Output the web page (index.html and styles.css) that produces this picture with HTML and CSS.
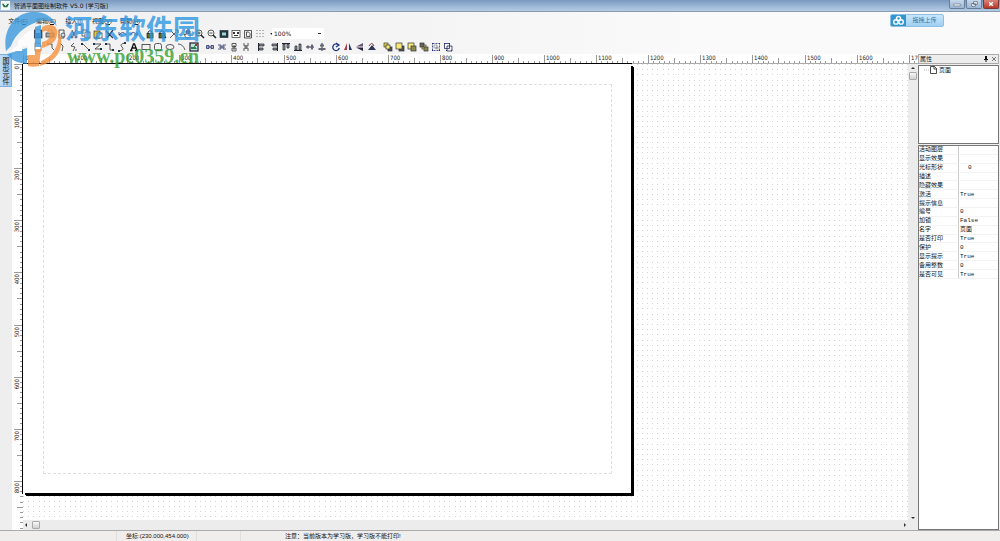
FILE: index.html
```html
<!DOCTYPE html>
<html lang="zh-CN">
<head>
<meta charset="utf-8">
<title>智通平面图绘制软件 V5.0 [学习版]</title>
<link rel="stylesheet" href="styles.css">
</head>
<body>
<div class="app">
  <header class="titlebar">
    <svg class="app-icon" viewBox="0 0 10 10"><rect width="10" height="10" fill="#f4faf6"/><path d="M1 3h3l1 2 1-2h3L7 7H3z" fill="#2b6f50"/><path d="M3 3l2 2 2-2" stroke="#fff" fill="none"/></svg>
    <h1 class="title">智通平面图绘制软件 V5.0 [学习版]</h1>
    <div class="window-buttons">
      <button class="win" aria-label="最小化"><svg viewBox="0 0 15 8"><path d="M4 4h7v2H4z" fill="#fff" stroke="#53657c" stroke-width=".6"/></svg></button>
      <button class="win" aria-label="还原"><svg viewBox="0 0 15 8"><path d="M7 1.5h4v3H7zM5 3.500h4v3H5z" fill="#fff" stroke="#53657c" stroke-width=".8"/></svg></button>
      <button class="win close" aria-label="关闭"><svg viewBox="0 0 15 8"><path d="M5.500 2l4 4m0-4l-4 4" stroke="#fff" stroke-width="1.500"/></svg></button>
    </div>
  </header>

  <div class="bars">
    <nav class="menu">
      <button>文件(<u>F</u>)</button><button>编辑(<u>E</u>)</button><button>插入(<u>I</u>)</button><button>视图(<u>V</u>)</button><button>帮助(<u>H</u>)</button>
    </nav>
    <div class="toolbar" id="main-tools">
      <select class="zoom-box" aria-label="缩放"><option>100%</option></select>
    </div>
    <div class="toolbar" id="draw-tools"></div>
    <button class="upload">
      <span class="upload-mark"><svg viewBox="0 0 14 12"><g fill="none" stroke="#fff" stroke-width="1.500"><circle cx="7" cy="3.800" r="2.200"/><circle cx="4.200" cy="7.600" r="2.400"/><circle cx="9.800" cy="7.600" r="2.400"/></g></svg></span>
      <span class="upload-text">拖拽上传</span>
    </button>
    <div class="watermark">
      <svg class="mark-logo" viewBox="4 11 58 56">
        <path d="M6 50C2 28 16 10 35 11c10 0 18 5 22 14-5-5-12-7-20-4-14 5-22 13-26 24z" fill="#3b9ade"/>
        <path d="M7 53l20-6v16C17 62 11 59 7 53z" fill="#3b9ade"/>
        <path d="M35 26l6-2v22h-6z" fill="#3b9ade"/>
        <path d="M10 50l8-6v-4l8-8 8-4v34h-6V45h-6v5z" fill="#fff"/>
        <path d="M42 26c9-5 17-1 15 8-1 7-7 11-15 13v-6c5-1 8-4 8-7 0-4-4-5-8-3z" fill="#f5923e"/>
        <path d="M35 48h6l-2 17c-4 1-8 1-11 0V54h7z" fill="#f5923e"/>
        <path d="M58 28c9 17-1 33-18 37l1-5c13-5 19-16 17-32z" fill="#f5923e"/>
      </svg>
      <div class="mark-words"><span class="mark-name">河东软件园</span><span class="mark-url">www.pc0359.cn</span></div>
    </div>
  </div>

  <main class="work">
    <aside class="side"><button class="side-tab">图形元件</button></aside>
    <section class="editor">
      <svg class="ruler ruler-top" id="ruler-top"></svg>
      <svg class="ruler ruler-left" id="ruler-left"></svg>
      <div class="canvas">
        <svg class="grid"><defs><pattern id="dots" width="26" height="26" patternUnits="userSpaceOnUse"><g id="dot-cells" fill="#d4d4d4"></g></pattern></defs><rect width="100%" height="100%" fill="url(#dots)"/></svg>
        <div class="sheet"><div class="margin"></div></div>
      </div>
      <div class="vscroll"><i class="arrow up"></i><i class="thumb"></i><i class="arrow down"></i></div>
      <div class="hscroll"><i class="arrow left"></i><i class="thumb"></i><i class="arrow right"></i></div>
    </section>
    <aside class="props">
      <div class="props-head"><h2>属性</h2>
        <button aria-label="固定"><svg viewBox="0 0 6 6"><path d="M2 0h2v3h1v1H3.500v2h-1V4H1V3h1z" fill="#111"/></svg></button>
        <button aria-label="关闭"><svg viewBox="0 0 6 6"><path d="M1 1l4 4m0-4L1 5" stroke="#555" stroke-width=".8"/></svg></button>
      </div>
      <div class="tree"><svg viewBox="0 0 18 8"><path d="M4 4h5" stroke="#bbb" stroke-dasharray="1 1"/><path d="M10.500.5h4l2 2v5h-6zM14 .5v2.500h2.500" fill="#fff" stroke="#222" stroke-width=".8"/></svg><span>页面</span></div>
      <div class="sheet-props">
        <table>
          <tr><th>活动图层</th><td></td></tr>
          <tr><th>显示效果</th><td></td></tr>
          <tr><th>光标形状</th><td class="inset">0</td></tr>
          <tr><th>描述</th><td></td></tr>
          <tr><th>隐藏效果</th><td></td></tr>
          <tr><th>激活</th><td>True</td></tr>
          <tr><th>提示信息</th><td></td></tr>
          <tr><th>编号</th><td>0</td></tr>
          <tr><th>加锁</th><td>False</td></tr>
          <tr><th>名字</th><td>页面</td></tr>
          <tr><th>是否打印</th><td>True</td></tr>
          <tr><th>保护</th><td>0</td></tr>
          <tr><th>显示提示</th><td>True</td></tr>
          <tr><th>备用整数</th><td>0</td></tr>
          <tr><th>是否可见</th><td>True</td></tr>
        </table>
      </div>
    </aside>
  </main>

  <footer class="status"><span class="cell first"></span><span class="cell coords">坐标:(230.000,454.000)</span><span class="cell spare"></span><span class="cell note">注意：当前版本为学习版，学习版不能打印!</span></footer>
</div>
<script src="app.js"></script>
</body>
</html>
```
FILE: styles.css
```css
* { box-sizing: border-box; }
body { margin: 0; font: 6px/8px "Liberation Sans", "Noto Sans CJK SC", sans-serif; color: #111; background: #f0eeee; }
button { border: 0; padding: 0; margin: 0; background: none; font: inherit; color: inherit; display: block; }
h1, h2 { margin: 0; font: inherit; }
svg { display: block; }
.app { height: 100vh; display: flex; flex-direction: column; overflow: hidden; }

.titlebar { flex: none; height: 12px; display: flex; align-items: center; background: linear-gradient(#7898bd, #9db9d8 60%, #b4cae2); border-bottom: 1px solid #8a9cb2; padding-left: 1px; }
.app-icon { width: 9px; height: 9px; }
.title { margin-left: 4px; flex: 1; white-space: nowrap; font-family: "DejaVu Sans", "Noto Sans CJK SC", sans-serif; }
.window-buttons { display: flex; align-self: flex-start; gap: 1px; padding-right: 1px; }
.win { width: 16px; height: 9px; border: 1px solid #667d99; border-top: 0; border-radius: 0 0 2px 2px; background: linear-gradient(#c7d7ea, #9cb5d2); }
.win svg { width: 14px; height: 8px; }
.win.close { background: linear-gradient(#d9837a, #b93728); border-color: #7c3530; }

.bars { flex: none; position: relative; height: 42px; background: linear-gradient(90deg, #f1f1f1, #f4f4f4 40%, #fafafa 70%); padding-top: 2px; }
.menu { display: flex; height: 13px; padding-left: 8px; gap: 8px; }
.menu button { width: 20px; line-height: 10px; white-space: nowrap; }
.toolbar { display: flex; align-items: center; height: 13px; padding-left: 32px; }
.toolbar button { width: 12px; height: 12px; flex: none; }
.toolbar button svg { width: 10px; height: 10px; margin: 1px; }
.toolbar .gap { width: 4px; flex: none; }
.toolbar .hair { width: 2px; }
.toolbar .narrow { width: 6px; }
.zoom-box { appearance: none; order: 1; width: 52px; height: 11px; border: 0; border-radius: 0; padding: 0 2px; font: 6px/11px "DejaVu Sans", sans-serif; color: #111; background: #fff linear-gradient(#333, #333) no-repeat 46px 5px / 3px 1px; }
.upload { position: absolute; right: 56px; top: 2px; width: 54px; height: 13px; display: flex; border: 1px solid #8ebfe2; border-radius: 2px; overflow: hidden; background: linear-gradient(#c9e6fb, #9fd0f2); color: #3f74a0; }
.upload-mark { width: 15px; height: 11px; background: #2e97d3; }
.upload-mark svg { width: 13px; height: 11px; margin-left: 1px; }
.upload-text { flex: 1; line-height: 11px; text-align: center; }
.watermark { position: absolute; left: 4px; top: 0; display: flex; gap: 3px; pointer-events: none; opacity: .8; z-index: 3; }
.mark-logo { width: 58px; height: 56px; }
.mark-words { display: flex; flex-direction: column; }
.mark-name { font: bold 27px/32px "Noto Sans CJK SC", sans-serif; color: #2f97e2; }
.mark-url { font: bold 20px/24px "Liberation Serif", serif; color: #38a232; padding-left: 2px; }

.work { flex: 1; min-height: 0; display: flex; }
.side { width: 12px; background: #eee; flex: none; }
.side-tab { width: 12px; height: 33px; border: 1px solid #7daede; border-left: 0; background: linear-gradient(90deg, #bfdcf8, #9cc8f2); writing-mode: vertical-rl; line-height: 11px; text-align: center; font-size: 7px; }
.editor { flex: 1; min-width: 0; display: grid; grid-template: 10px 1fr 10px / 11px 1fr 10px; }
.ruler { background: #fff; font: 6px "DejaVu Sans Condensed", "DejaVu Sans", sans-serif; overflow: hidden; width: 100%; height: 100%; }
.ruler-top { grid-area: 1 / 1 / 2 / 4; }
.ruler-left { grid-area: 2 / 1 / 4 / 2; }
.canvas { grid-area: 2 / 2; position: relative; overflow: hidden; background: #fff; }
.grid { position: absolute; inset: 0; width: 100%; height: 100%; }
.sheet { position: absolute; left: 0; top: 0; width: 608px; height: 429px; background: #fff; box-shadow: 2px 2px 0 #000, 3px 3px 0 #000; padding: 20px 19px 19px 20px; }
.margin { height: 100%; border: 1px dashed #dedede; }
.vscroll, .hscroll { background: #ececec; display: flex; align-items: center; }
.vscroll { grid-area: 2 / 3 / 4 / 4; flex-direction: column; padding: 3px 0 11px; }
.hscroll { grid-area: 3 / 2; padding: 0 2px; }
.arrow { width: 0; height: 0; border: 2px solid transparent; }
.arrow.up { border-bottom-color: #333; border-top: 0; }
.arrow.down { border-top-color: #333; border-bottom: 0; margin-top: auto; }
.arrow.left { border-right-color: #333; border-left: 0; }
.arrow.right { border-left-color: #333; border-right: 0; margin-left: auto; }
.thumb { width: 8px; height: 8px; border: 1px solid #aaa; border-radius: 1px; background: linear-gradient(#f8f8f8, #d0d0d0); }
.vscroll .thumb { margin-top: 3px; }
.hscroll .thumb { margin-left: 5px; }

.props { width: 82px; flex: none; display: flex; flex-direction: column; gap: 1px; padding-right: 1px; }
.props-head { height: 10px; display: flex; align-items: center; border: 1px solid #aaa; background: #ededed; padding: 0 1px; gap: 2px; }
.props-head h2 { flex: 1; }
.props-head svg { width: 6px; height: 6px; }
.tree { height: 79px; border: 1px solid #777; background: #fff; display: flex; padding-left: 1px; gap: 1px; }
.tree svg { width: 18px; height: 8px; }
.sheet-props { flex: 1; border: 1px solid #777; background: #fff; }
table { width: 100%; height: 133px; border-spacing: 0; table-layout: fixed; }
th, td { padding: 0 1px; font-weight: normal; text-align: left; line-height: 7px; border-bottom: 1px solid #f3f3f3; white-space: nowrap; }
th { width: 40px; padding: 0; border-right: 1px solid #ccc; }
td { font-family: "Liberation Mono", "Noto Sans CJK SC", monospace; }
td.inset { padding-left: 9px; }

.status { flex: none; height: 11px; border-top: 1px solid #aaa; background: #f0eded; display: flex; line-height: 10px; }
.cell { border-right: 1px solid #e2dede; white-space: nowrap; }
.first { width: 117px; }
.coords { width: 80px; padding-left: 9px; }
.spare { width: 44px; }
.note { flex: 1; padding-left: 44px; border: 0; }
```
FILE: app.js
```js
const K = 'fill="none" stroke="#333" stroke-width=".8"';
const N = 'fill="none" stroke="#232b66" stroke-width=".8"';
const box = (x, y, w, h, f) => `<rect x="${x}" y="${y}" width="${w}" height="${h}" fill="${f}" stroke="#333" stroke-width=".7"/>`;
const lock = '<path d="M3 5V3q2-3 4 0v2" fill="none" stroke="#333"/><rect x="2" y="4.500" width="6" height="4.500" fill="#5e6b1d" stroke="#222" stroke-width=".7"/>';
const icons = {
  新建: `<path d="M2 1h4l2 2v6H2z" fill="#fff" stroke="#777" stroke-width=".8"/>`,
  保存: box(1, 1, 8, 8, '#456890') + '<path d="M3 1h4v3H3z" fill="#fff"/>',
  打印: box(1, 4, 8, 4, '#aaa') + '<path d="M3 1h4v3H3z" fill="#fff" stroke="#777" stroke-width=".6"/>',
  预览: `<path d="M2 1h5v8H2z" ${K}/><circle cx="6" cy="6" r="2" fill="#cde" stroke="#333" stroke-width=".7"/>`,
  剪切: `<path d="M3 1l3 6M7 1L4 7" ${K}/><circle cx="3" cy="8" r="1" ${N}/><circle cx="7" cy="8" r="1" ${N}/>`,
  复制: box(1, 1, 5, 6, '#fff') + box(4, 3, 5, 6, '#fff'),
  粘贴: box(1, 2, 6, 7, '#e5c832') + box(4, 4, 5, 5, '#fff'),
  删除: '<path d="M1 2l7 7M8 1L2 9" stroke="#28335f" stroke-width="1.300"/>',
  撤销: `<path d="M2 3v3h3M2 6q4-5 7 0" ${N}/>`,
  重做: `<path d="M8 3v3H5M8 6Q4 1 1 6" ${N}/>`,
  锁定: lock,
  解锁: lock + '<path d="M7 6l2 3" stroke="#111"/>',
  工具: `<path d="M1 9l6-6M2 2l6 6M6 1h3v3" ${K}/>`,
  平移: `<path d="M3 9L1 5l2 1V2h1v3V1h1v4V1h1v4V2h1v4L7 9z" fill="#fff" stroke="#333" stroke-width=".7"/>`,
  放大: `<circle cx="4" cy="4" r="3" ${K}/><path d="M6 6l3 3" stroke="#222" stroke-width="1.500"/><path d="M2.500 4h3M4 2.500v3" ${K}/>`,
  缩小: `<circle cx="4" cy="4" r="3" ${K}/><path d="M6 6l3 3" stroke="#222" stroke-width="1.500"/><path d="M2.500 4h3" ${K}/>`,
  全屏: box(1, 1.5, 8, 7, '#1c3844') + '<path d="M3 3.500h4v3H3z" fill="#a9d0d0"/>',
  适合: box(1, 1.5, 8, 7, '#fff') + '<path d="M2 3h2v2H2zM6 3h2v2H6zM3 6h4v1H3z" fill="#333"/>',
  页面: `<path d="M1.500 1.500h7V9h-7zM3.500 3h2l1.500 1.500V7.500H3.500z" ${K}/>`,
  网格: '<path d="M2 1v8M5 1v8M8 1v8" stroke="#777" stroke-dasharray="1 2"/>',
  网格选项: '<path d="M3 4h4L5 6z" fill="#222"/>',
  多边形: `<path d="M2 2h5v4l2 2" ${K}/>`,
  直角: `<path d="M3 1l3 3-1 5" ${K}/>`,
  曲笔: `<path d="M5 1L2 4l4 1-2 4M7 7v2" ${K}/>`,
  直线: '<path d="M1.500 1.500l7 7" stroke="#444" stroke-width=".8"/><path d="M0 1h2v2H0zM7 7h2v2H7z" fill="#234"/>',
  折线: `<path d="M1 2h7L2 7h6" ${K}/><path d="M0 1h2v2H0zM7 6h2v2H7z" fill="#234"/>`,
  连线: `<path d="M1 2h4v6h4" ${K}/><path d="M0 1h2v2H0zM7 7h2v2H7z" fill="#234"/>`,
  曲线: `<path d="M8 1Q2 2 5 5T2 9" ${K}/><path d="M7 0h2v2H7zM1 8h2v2H1z" fill="#234"/>`,
  文字: '<path d="M2 8.500L4.500 2h1L8 8.500M3.500 6h3M1 8.500h2.500M6 8.500h3" fill="none" stroke="#111" stroke-width="1.300"/>',
  矩形: `<rect x="1" y="2.500" width="8" height="5" ${K}/>`,
  圆角矩形: `<rect x="1.500" y="1.500" width="7" height="7" rx="2" ${K}/>`,
  椭圆: `<ellipse cx="5" cy="5" rx="4" ry="2.500" ${K}/>`,
  弧: `<path d="M1 2q5 0 7 6" ${K}/>`,
  图片: '<rect x="1" y="1" width="8" height="8" fill="#bde4d8" stroke="#211a32" stroke-width="1.200"/><path d="M2 5h3V3l3 4H2z" fill="#247d55"/><path d="M6 2h2v2H6z" fill="#933"/>',
  等宽: `<path d="M1.500 3.500h2.500v3H1.500zM6 3.500h2.500v3H6zM2 5h6" ${N}/>`,
  水平间距: `<path d="M1 3h3v4H1M9 3H6v4h3M2 5h6" ${N}/>`,
  等高: `<path d="M3 1.500h4v3H3zM3 6h4v3H3zM5 3v5" ${K}/>`,
  垂直间距: `<path d="M3 1v3h4V1M3 9V6h4v3M5 3v4" ${K}/>`,
  左对齐: '<path d="M1.500 1v8" stroke="#223"/><path d="M2 2h5v2H2zM2 6h4v2H2z" fill="#8293a5" stroke="#222" stroke-width=".7"/>',
  右对齐: '<path d="M8.500 1v8" stroke="#223"/><path d="M3 2h5v2H3zM4 6h4v2H4z" fill="#8293a5" stroke="#222" stroke-width=".7"/>',
  顶对齐: '<path d="M1 1.500h8" stroke="#223"/><path d="M2 2h2v6H2zM6 2h2v4H6z" fill="#8293a5" stroke="#222" stroke-width=".7"/>',
  底对齐: '<path d="M1 8.500h8" stroke="#223"/><path d="M2 4h2v4H2zM6 2h2v6H6z" fill="#8293a5" stroke="#222" stroke-width=".7"/>',
  横向居中: '<path d="M1 5h8" stroke="#223"/><path d="M2 3.500h2v3H2zM6 2.500h2v5H6z" fill="#667"/>',
  纵向居中: '<path d="M5 1v8" stroke="#223"/><path d="M3 2.500h4v2H3zM1.500 6h7v2h-7z" fill="#667"/>',
  旋转: '<path d="M7.500 3A3.300 3.300 0 1 0 8.300 6M5 1l3 2-3 2" fill="none" stroke="#1d3480" stroke-width="1.300"/>',
  水平翻转: '<path d="M4 1v7H1z" fill="#a43e4d"/><path d="M6 1v7h3z" fill="#25365f"/>',
  垂直翻转: '<path d="M8 1v3.500H1z" fill="#6b5678"/><path d="M8 9V5.500H1z" fill="#28263f"/>',
  自由旋转: '<path d="M1 8h8L5 3z" fill="#303455"/><path d="M2 4q3-5 5 0" fill="none" stroke="#843d50"/>',
  置前: box(1, 1, 4, 4, '#eadf47') + box(5, 5, 4, 4, '#555') + box(3, 3, 4, 4, '#f3ea78'),
  前移: box(4, 4, 5, 5, '#555') + box(1, 1, 6, 6, '#f3ea78'),
  后移: box(1, 1, 6, 6, '#f3ea78') + box(4, 4, 5, 5, '#8c8a4d'),
  置后: box(3, 3, 4, 4, '#f3ea78') + box(1, 1, 4, 4, '#666') + box(5, 5, 4, 4, '#8c8a4d'),
  组合: `<path d="M1.500 1.500h7v7h-7z" ${N} stroke-dasharray="2 1"/><path d="M3 3h3v3H3zM5 5h2v2H5z" fill="none" stroke="#667" stroke-width=".5"/><path d="M1 1h1v1H1zM8 1h1v1H8zM1 8h1v1H1zM8 8h1v1H8z" fill="#20296a"/>`,
  取消组合: `<path d="M1.500 1.500h5v5h-5zM4 4h5v5H4z" ${N}/><path d="M1 1h1v1H1zM6 1h1v1H6zM8 8h1v1H8zM3 8h1v1H3z" fill="#20296a"/>`
};

function fill(id, list) {
  const html = list.split(' ').map(n => n === '|' ? '<i class="gap"></i>'
    : n === ':' ? '<i class="gap hair"></i>'
    : `<button class="${n === '网格选项' ? 'narrow' : ''}" aria-label="${n}"><svg viewBox="0 0 10 10">${icons[n]}</svg></button>`).join('');
  document.getElementById(id).insertAdjacentHTML('afterbegin', html);
}
fill('main-tools', '保存 打印 预览 剪切 复制 粘贴 删除 撤销 重做 | 锁定 解锁 工具 : 平移 放大 缩小 全屏 适合 页面 网格 网格选项');
fill('draw-tools', '新建 多边形 直角 曲笔 直线 折线 连线 曲线 文字 矩形 圆角矩形 椭圆 弧 图片 | 等宽 水平间距 等高 垂直间距 | 左对齐 右对齐 顶对齐 底对齐 横向居中 纵向居中 : 旋转 水平翻转 垂直翻转 自由旋转 | 置前 前移 后移 置后 组合 取消组合');

// Ten minor divisions per 100 units.
const UNIT = 52.1;
function ticks(length, drawTick, drawLabel) {
  let lines = '', labels = '';
  for (let i = 0; i * UNIT / 10 < length; i++) {
    const p = Math.round(i * UNIT / 10);
    lines += drawTick(p, i % 10 === 0 ? 9 : i % 5 === 0 ? 6 : 3);
    if (i % 10 === 0) labels += drawLabel(p, i * 10);
  }
  return `<g stroke="#999">${lines}</g><g fill="#222">${labels}</g>`;
}
function drawRulers() {
  const top = document.getElementById('ruler-top');
  const left = document.getElementById('ruler-left');
  const width = top.getBoundingClientRect().width;
  const height = left.getBoundingClientRect().height;
  top.innerHTML = ticks(width - 11,
    (p, n) => `<path d="M${p + 11}.5 ${10 - n}V10"/>`,
    (p, t) => `<text x="${p + 13}" y="6">${t}</text>`)
    + `<path d="M11 9.500H620" stroke="#000"/><path d="M620 9.500H${width}" stroke="#aaa"/>`;
  left.innerHTML = ticks(height,
    (p, n) => `<path d="M${11 - n} ${p}.5H11"/>`,
    (p, t) => `<text transform="translate(7 ${p + 2}) rotate(-90)" text-anchor="end">${t}</text>`)
    + '<path d="M10.500 0V430" stroke="#000"/>';
}
drawRulers();
addEventListener('resize', drawRulers);

const steps = [0, 5, 10, 16, 21];
document.getElementById('dot-cells').innerHTML =
  steps.flatMap(x => steps.map(y => `<rect x="${x}" y="${y}" width="1" height="1"/>`)).join('');
```
